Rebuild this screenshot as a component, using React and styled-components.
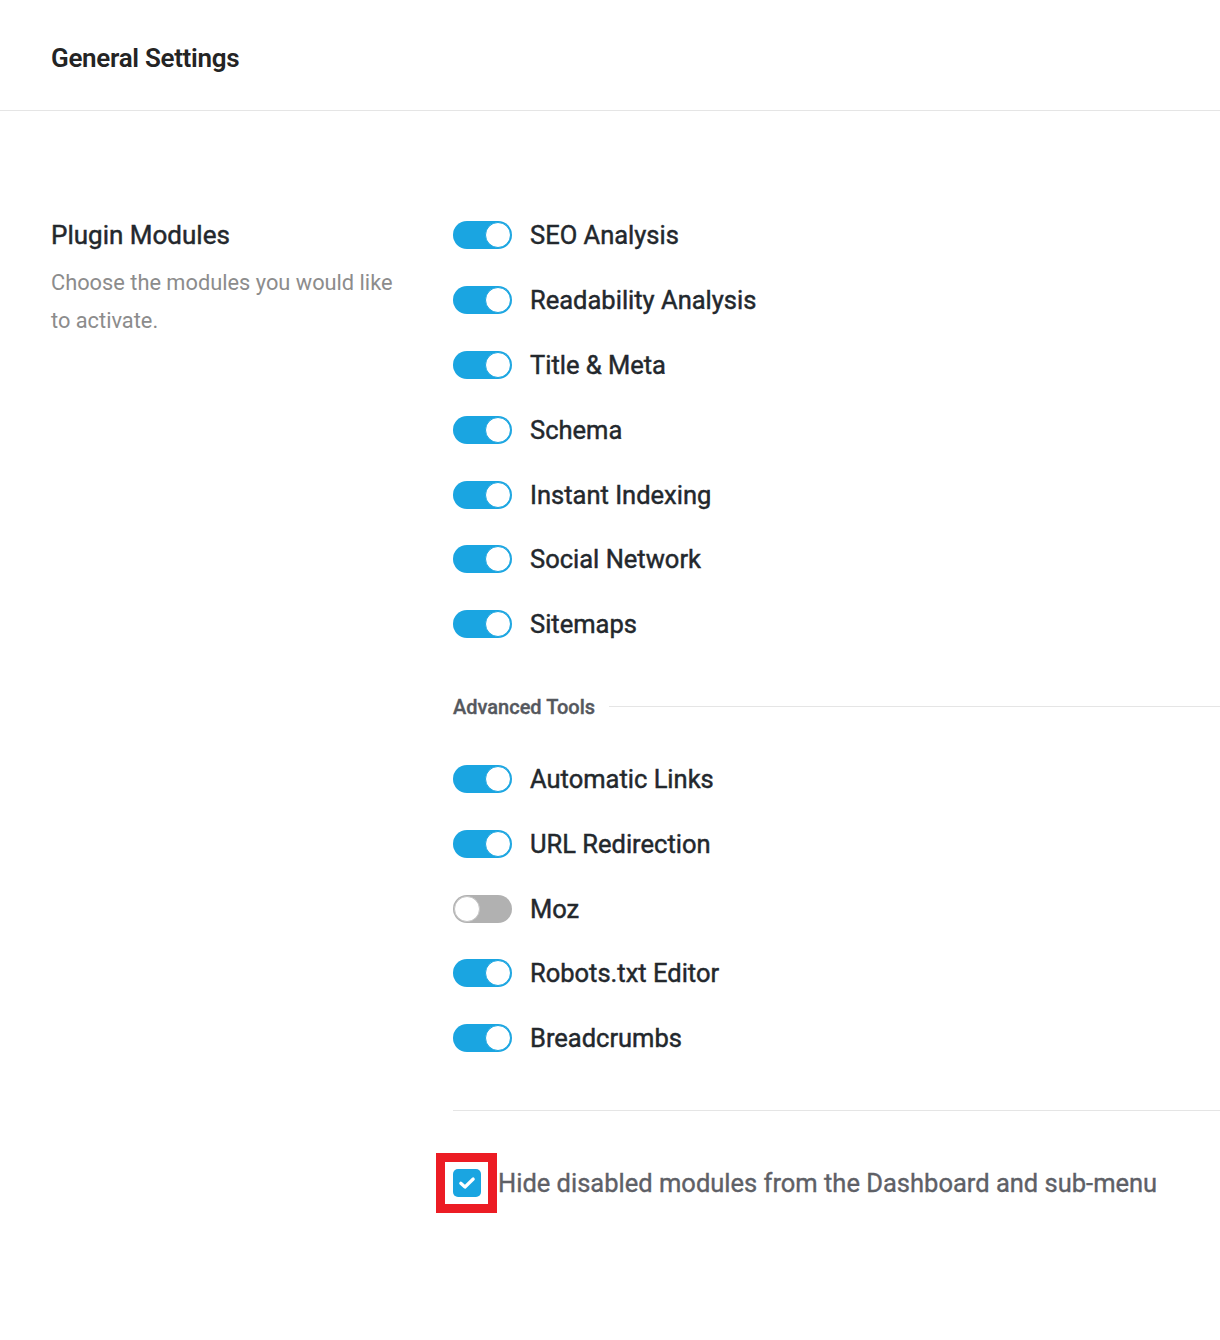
import React from "react";
import styled, { createGlobalStyle } from "styled-components";

const Global = createGlobalStyle`
  html, body { margin: 0; padding: 0; background: #ffffff; }
  body { font-family: Roboto, "Liberation Sans", Arial, sans-serif; -webkit-font-smoothing: antialiased; }
  * { box-sizing: border-box; }
`;

const Page = styled.div`
  width: 1220px;
  min-height: 1340px;
  background: #fff;
`;

const Header = styled.header`
  height: 111px;
  padding: 6px 51px 0;
  display: flex;
  align-items: center;
  border-bottom: 1px solid #e5e5e5;
`;

const PageTitle = styled.h1`
  margin: 0;
  font-size: 26px;
  font-weight: 600;
  color: #242424;
  letter-spacing: -0.3px;
`;

const Body = styled.div`
  display: grid;
  grid-template-columns: 402px 1fr;
  padding: 92px 0 0 51px;
`;

const Intro = styled.div`
  padding-top: 16px;
`;

const SectionTitle = styled.h2`
  margin: 0;
  font-size: 26px;
  line-height: 32px;
  font-weight: 400;
  color: #23282d;
  -webkit-text-stroke: 0.45px #23282d;
`;

const Description = styled.p`
  margin: 13px 0 0;
  font-size: 21.8px;
  line-height: 38px;
  font-weight: 400;
  color: #8c8c8c;
`;

const Modules = styled.div`
  display: flex;
  flex-direction: column;
`;

const List = styled.div`
  display: flex;
  flex-direction: column;
`;

const Row = styled.label`
  height: 64.8px;
  display: flex;
  align-items: center;
  gap: 18px;
  cursor: pointer;
`;

const Track = styled.span`
  position: relative;
  flex: none;
  width: 59px;
  height: 28px;
  border-radius: 14px;
  background: ${(p) => (p.$on ? "#1aa5e1" : "#b1b1b1")};
`;

const Knob = styled.span`
  position: absolute;
  top: 1px;
  left: ${(p) => (p.$on ? "32px" : "1px")};
  width: 26px;
  height: 26px;
  border-radius: 50%;
  background: #fff;
  border: 1px solid ${(p) => (p.$on ? "#1aa5e1" : "#c4c4c4")};
`;

const Label = styled.span`
  font-size: 25.5px;
  font-weight: 400;
  color: #23282d;
  -webkit-text-stroke: 0.45px #23282d;
`;

const GroupHead = styled.div`
  display: flex;
  align-items: center;
  gap: 14px;
  margin: 38px 0 28px;
  height: 24px;
`;

const GroupTitle = styled.span`
  font-size: 20px;
  font-weight: 500;
  color: #55585e;
  white-space: nowrap;
  -webkit-text-stroke: 0.35px #55585e;
`;

const Rule = styled.span`
  flex: 1;
  height: 1px;
  background: #e5e5e5;
`;

const Divider = styled.hr`
  margin: 39px 0 0;
  border: 0;
  height: 1px;
  background: #e5e5e5;
`;

const CheckRow = styled.label`
  margin-top: 42px;
  height: 60px;
  display: flex;
  align-items: center;
`;

const CheckFrame = styled.span`
  flex: none;
  margin-left: -17px;
  width: 61px;
  height: 60px;
  border: 9px solid #ec1c24;
  display: flex;
  align-items: center;
  justify-content: center;
  background: #fff;
`;

const CheckBox = styled.span`
  width: 28px;
  height: 28px;
  border-radius: 5px;
  background: #1aa5e1;
  display: flex;
  align-items: center;
  justify-content: center;
`;

const CheckText = styled.span`
  margin-left: 1px;
  font-size: 25.5px;
  font-weight: 400;
  color: #5e6066;
  -webkit-text-stroke: 0.35px #5e6066;
`;

const modules = [
  ["SEO Analysis", true],
  ["Readability Analysis", true],
  ["Title & Meta", true],
  ["Schema", true],
  ["Instant Indexing", true],
  ["Social Network", true],
  ["Sitemaps", true],
];

const advanced = [
  ["Automatic Links", true],
  ["URL Redirection", true],
  ["Moz", false],
  ["Robots.txt Editor", true],
  ["Breadcrumbs", true],
];

function Toggle({ on }) {
  return (
    <Track $on={on}>
      <Knob $on={on} />
    </Track>
  );
}

function ModuleRow({ name, on }) {
  return (
    <Row>
      <Toggle on={on} />
      <Label>{name}</Label>
    </Row>
  );
}

export default function App() {
  return (
    <Page>
      <Global />
      <Header>
        <PageTitle>General Settings</PageTitle>
      </Header>
      <Body>
        <Intro>
          <SectionTitle>Plugin Modules</SectionTitle>
          <Description>
            Choose the modules you would like
            <br />
            to activate.
          </Description>
        </Intro>
        <Modules>
          <List>
            {modules.map(([n, on]) => (
              <ModuleRow key={n} name={n} on={on} />
            ))}
          </List>
          <GroupHead>
            <GroupTitle>Advanced Tools</GroupTitle>
            <Rule />
          </GroupHead>
          <List>
            {advanced.map(([n, on]) => (
              <ModuleRow key={n} name={n} on={on} />
            ))}
          </List>
          <Divider />
          <CheckRow>
            <CheckFrame>
              <CheckBox>
                <svg width="18" height="14" viewBox="0 0 18 14" fill="none">
                  <path
                    d="M2.8 7.3 L7 11 L15.2 3"
                    stroke="#fff"
                    strokeWidth="3.2"
                    strokeLinecap="round"
                    strokeLinejoin="round"
                  />
                </svg>
              </CheckBox>
            </CheckFrame>
            <CheckText>Hide disabled modules from the Dashboard and sub-menu</CheckText>
          </CheckRow>
        </Modules>
      </Body>
    </Page>
  );
}
